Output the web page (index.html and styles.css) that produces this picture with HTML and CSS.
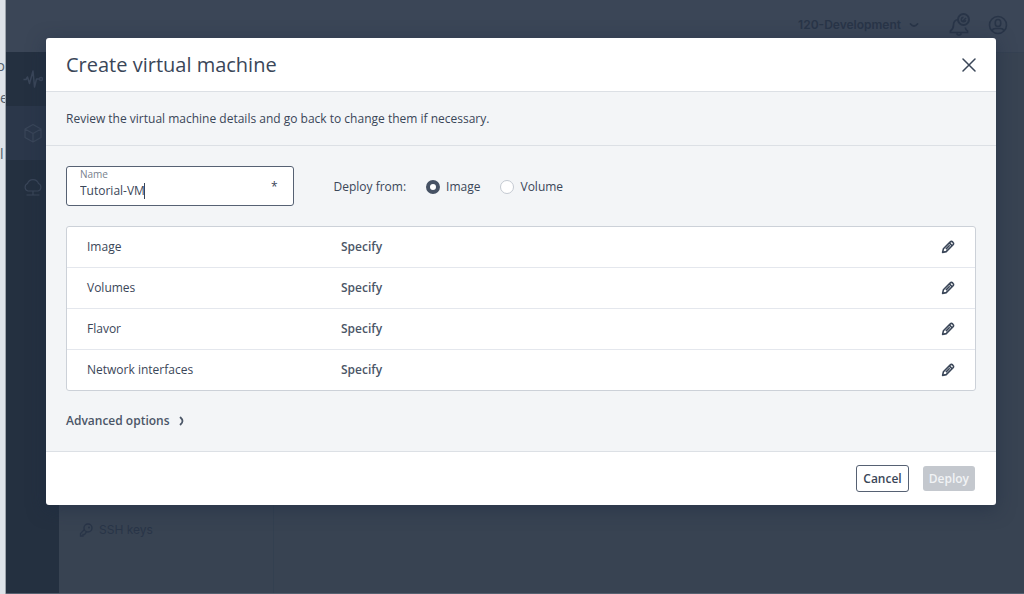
FILE: index.html
```html
<!DOCTYPE html>
<html lang="en">
<head>
<meta charset="utf-8">
<meta name="viewport" content="width=device-width, initial-scale=1">
<title>Create virtual machine</title>
<link rel="stylesheet" href="styles.css">
</head>
<body>
<svg class="defs" aria-hidden="true">
  <symbol id="pencil" viewBox="0 0 14 14"><path d="M1.600 12.400l.8-3.600 6.900-6.900a1.500 1.500 0 0 1 2.200 0l.6.6a1.500 1.500 0 0 1 0 2.200L5.200 11.600zM4.900 9.100l3.800-3.800M8.300 2.900l2.800 2.800" fill="none" stroke="currentColor" stroke-width="1.600" stroke-linejoin="round"/></symbol>
</svg>
<div class="page">
  <div class="peek" aria-hidden="true">
    <span class="peek-text peek-first">o</span>
    <span class="peek-text peek-second">e</span>
    <span class="peek-text peek-third">l</span>
  </div>
  <div class="app">
    <header class="topbar">
      <span class="project">120-Development</span>
      <svg class="chevron" viewBox="0 0 10 10"><path d="M1.500 4q3.500 4 7 0" fill="none" stroke="currentColor" stroke-width="1.800" stroke-linecap="round"/></svg>
      <svg class="bell" viewBox="0 0 24 24"><path d="M10 6.500C7 7 5.500 9 5.500 12c0 3-.5 4-3 6v1.500h17V18c-1.500-1-2-2-2.200-3.500M8.500 20.500q2.500 3.500 5 0" fill="none" stroke="currentColor" stroke-width="1.700"/><circle cx="15.500" cy="6.500" r="5.500" fill="none" stroke="currentColor" stroke-width="2"/><path d="M18 5l-3 3M15.500 4.200a2.300 2.300 0 1 0 2.300 3" fill="none" stroke="currentColor" stroke-width="1.500"/></svg>
      <svg class="user" viewBox="0 0 20 20"><g fill="none" stroke="currentColor" stroke-width="1.600"><circle cx="10" cy="10" r="8.500"/><rect x="7.300" y="4.500" width="5.400" height="7" rx="2.700"/><path d="M4 16c.5-2 2-2.500 3.500-2.500h5c1.500 0 3 .5 3.500 2.500"/></g></svg>
    </header>
    <div class="workspace">
      <nav class="rail" aria-label="Main">
        <a class="rail-item" href="#monitor" aria-label="Monitoring"><svg viewBox="0 0 20 20"><path d="M.5 10.500H3L4.500 8l2 6.500L10 2l1.500 16 2-8h3" fill="none" stroke="currentColor" stroke-width="1.500" stroke-linejoin="round"/><circle cx="18" cy="10" r="1.500" fill="none" stroke="currentColor" stroke-width="1.400"/></svg></a>
        <a class="rail-item active" href="#compute" aria-label="Compute"><svg viewBox="0 0 20 20"><path d="M10 1.500l8 4.500v8.500l-8 4.500-8-4.500V6zM2 6l8 4.500L18 6M10 10.500V19" fill="none" stroke="currentColor" stroke-width="1.200" stroke-linejoin="round"/></svg></a>
        <a class="rail-item" href="#network" aria-label="Network"><svg viewBox="0 0 20 20"><path d="M5 14a4 4 0 0 1-.5-7.500 5.800 5.800 0 0 1 11 0A4 4 0 0 1 15 14zM10 14v4M3.500 18h13" fill="none" stroke="currentColor" stroke-width="1.200"/></svg></a>
      </nav>
      <aside class="submenu">
        <a class="submenu-link" href="#keys"><svg viewBox="0 0 14 14"><path d="M5.500 6.500L1.500 10.500V13H4v-1.500h1.500L7.500 9" fill="none" stroke="currentColor" stroke-width="1.300"/><circle cx="9" cy="5" r="4" fill="none" stroke="currentColor" stroke-width="1.400"/><circle cx="10" cy="4.500" r="1" fill="currentColor"/></svg>SSH keys</a>
      </aside>
      <main class="content"></main>
    </div>
  </div>
</div>

<div class="overlay">
  <form class="dialog" role="dialog" aria-labelledby="dialog-title">
    <header class="dialog-header">
      <h1 class="dialog-title" id="dialog-title">Create virtual machine</h1>
      <button class="icon-button" type="button" aria-label="Close"><svg class="close-icon" viewBox="0 0 14 14"><path d="M1 1l12 12M13 1L1 13" stroke="currentColor" stroke-width="1.500" stroke-linecap="round"/></svg></button>
    </header>
    <p class="intro">Review the virtual machine details and go back to change them if necessary.</p>
    <div class="dialog-body">
      <div class="settings">
        <div class="field">
          <div class="field-main">
            <label class="field-label" for="vm-name">Name</label>
            <div class="input-wrap">
              <input class="field-input" id="vm-name" type="text" value="Tutorial-VM" required>
              <span class="caret"></span>
            </div>
          </div>
          <span class="required">*</span>
        </div>
        <div class="source" role="radiogroup" aria-labelledby="source-label">
          <span id="source-label">Deploy from:</span>
          <label class="choice"><input class="radio" type="radio" name="source" checked>Image</label>
          <label class="choice"><input class="radio" type="radio" name="source">Volume</label>
        </div>
      </div>
      <div class="options">
        <div class="option"><span>Image</span><span class="specify">Specify</span><button class="icon-button" type="button" aria-label="Edit image"><svg class="pencil"><use href="#pencil"/></svg></button></div>
        <div class="option"><span>Volumes</span><span class="specify">Specify</span><button class="icon-button" type="button" aria-label="Edit volumes"><svg class="pencil"><use href="#pencil"/></svg></button></div>
        <div class="option"><span>Flavor</span><span class="specify">Specify</span><button class="icon-button" type="button" aria-label="Edit flavor"><svg class="pencil"><use href="#pencil"/></svg></button></div>
        <div class="option"><span>Network interfaces</span><span class="specify">Specify</span><button class="icon-button" type="button" aria-label="Edit network interfaces"><svg class="pencil"><use href="#pencil"/></svg></button></div>
      </div>
      <button class="advanced" type="button">Advanced options<svg class="advanced-icon" viewBox="0 0 6 10"><path d="M1.500 1.500Q5.500 5 1.500 8.500" fill="none" stroke="currentColor" stroke-width="1.800" stroke-linecap="round"/></svg></button>
    </div>
    <footer class="dialog-footer">
      <button class="button cancel" type="button">Cancel</button>
      <button class="button deploy" type="submit" disabled>Deploy</button>
    </footer>
  </form>
</div>
</body>
</html>
```
FILE: styles.css
```css
* { box-sizing: border-box; }
body {
  margin: 0;
  font: 12px/20px "Open Sans", "Noto Sans", sans-serif;
  color: #3a4658;
}
button, input { font: inherit; color: inherit; }
svg { display: block; }
.defs { position: absolute; width: 0; height: 0; }

.page { display: flex; min-height: 100vh; background: #384352; }
.peek {
  display: flex;
  flex-direction: column;
  width: 6px;
  overflow: hidden;
  background: #dee3e9;
  border-right: 1px solid #9da4ac;
  color: #535e6b;
  font-size: 14px;
}
.peek-text { line-height: 20px; }
.peek-first { align-self: flex-end; margin-top: 56px; }
.peek-second { margin-top: 12px; }
.peek-third { margin-top: 36px; }
.app {
  flex: 1;
  display: flex;
  flex-direction: column;
  border-bottom: 1px solid #566170;
}
.topbar {
  display: flex;
  align-items: center;
  justify-content: flex-end;
  height: 52px;
  padding: 0 16px 2px 0;
  background: #3b4657;
  color: #293548;
}
.project { font-size: 12px; font-weight: 600; font-family: Inter, sans-serif; }
.chevron { width: 10px; height: 10px; margin: 0 29px 0 8px; }
.bell { width: 24px; height: 24px; margin-right: 16px; }
.user { width: 20px; height: 20px; }
.workspace { flex: 1; display: flex; }
.rail { width: 53px; background: #243040; }
.rail-item {
  display: flex;
  align-items: center;
  justify-content: center;
  height: 54px;
  color: #3a4659;
}
.rail-item.active { background: #2b374a; }
.rail-item svg { width: 20px; height: 20px; }
.submenu {
  display: flex;
  align-items: flex-end;
  width: 215px;
  padding: 0 20px 53px;
  border-right: 1px solid #334050;
}
.submenu-link {
  display: flex;
  align-items: center;
  gap: 6px;
  color: #293548;
  font: 12px/20px Inter, sans-serif;
  text-decoration: none;
}
.submenu-link svg { width: 14px; height: 14px; }
.content { flex: 1; border-top: 1px solid #354152; }

.overlay { position: absolute; top: 0; left: 0; right: 0; padding: 38px 28px 38px 46px; }
.dialog {
  overflow: hidden;
  border-radius: 3px;
  background: #fff;
  box-shadow: 0 4px 18px #1b2a4180;
}
.dialog-header {
  display: flex;
  align-items: center;
  justify-content: space-between;
  padding: 13px 20px 12px;
}
.dialog-title { margin: 0; font-size: 20px; line-height: 28px; font-weight: 400; }
.icon-button {
  padding: 0;
  border: 0;
  background: none;
  cursor: pointer;
}
.close-icon { width: 14px; height: 14px; }
.intro {
  margin: 0;
  padding: 17px 20px 16px;
  background: #f3f5f7;
  border: solid #dce0e5;
  border-width: 1px 0;
}
.dialog-body {
  padding: 20px;
  background: #f3f5f7;
  border-bottom: 1px solid #dce0e5;
}
.settings { display: flex; align-items: center; gap: 40px; margin-bottom: 20px; }
.field {
  display: flex;
  align-items: center;
  width: 25%;
  height: 40px;
  padding: 0 15px 4px 13px;
  border: 1px solid #566173;
  border-radius: 3px;
  background: #fff;
}
.field-main { flex: 1; min-width: 0; }
.field-label { display: block; color: #78818d; font-size: 10px; line-height: 14px; }
.input-wrap { position: relative; }
.field-input {
  display: block;
  width: 100%;
  height: 20px;
  padding: 0;
  border: 0;
  outline: 0;
  background: none;
}
.caret {
  position: absolute;
  left: 64px;
  top: 2px;
  width: 1px;
  height: 16px;
  background: #3a4658;
}
.required { padding-top: 6px; }
.source { display: flex; align-items: center; gap: 20px; padding-top: 2px; }
.choice { display: flex; align-items: center; gap: 6px; }
.radio {
  appearance: none;
  width: 14px;
  height: 14px;
  margin: 0;
  border: 1px solid #c3c9d1;
  border-radius: 50%;
  background: #fff;
}
.radio:checked { border: 4px solid #465264; }
.options {
  overflow: hidden;
  border: 1px solid #ccd1d8;
  border-radius: 3px;
  background: #fff;
}
.option {
  display: grid;
  grid-template-columns: 254px 1fr auto;
  align-items: center;
  padding: 10px 20px;
}
.option + .option { border-top: 1px solid #e4e7ed; }
.specify, .advanced { font-weight: 600; color: #4b5667; }
.pencil { width: 14px; height: 14px; }
.advanced {
  display: flex;
  align-items: center;
  gap: 9px;
  margin-top: 20px;
  padding: 0;
  border: 0;
  background: none;
}
.advanced-icon { width: 6px; height: 10px; }
.dialog-footer {
  display: flex;
  align-items: center;
  justify-content: flex-end;
  gap: 14px;
  padding: 13px 21px;
}
.button { border-radius: 3px; font-weight: 600; line-height: 17px; }
.cancel { padding: 4px 6px; border: 1px solid #566173; background: #fff; }
.deploy { padding: 4px 6px; border: 0; background: #c4c8ce; color: #f1f3f5; }
```
